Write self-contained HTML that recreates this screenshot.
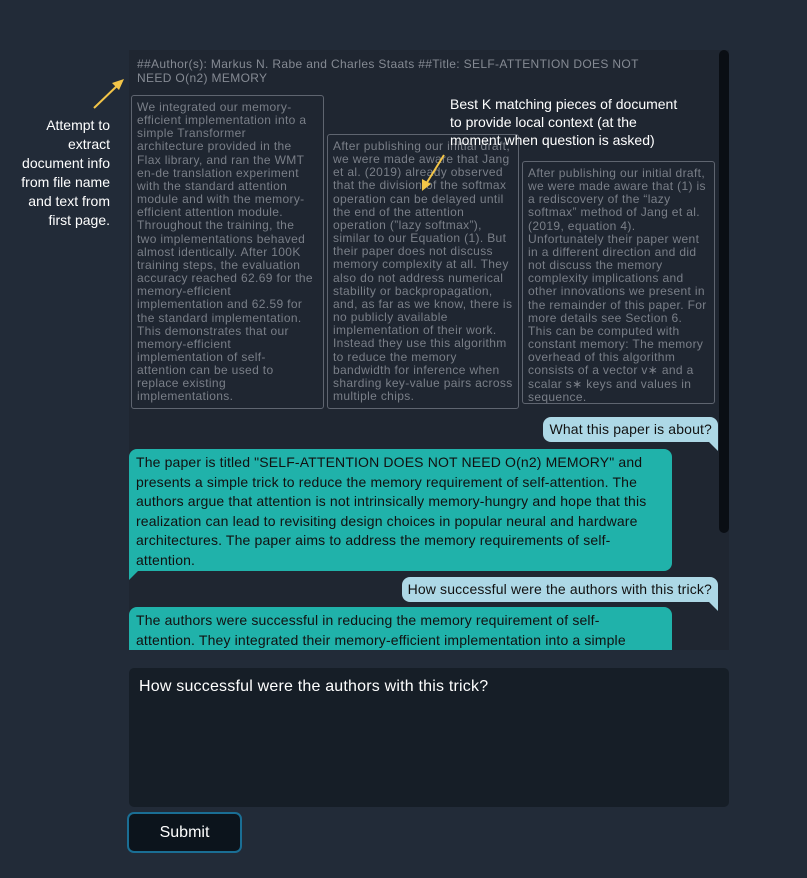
<!DOCTYPE html>
<html><head><meta charset="utf-8"><style>
*{box-sizing:border-box;margin:0;padding:0}
body{width:807px;height:878px;background:#222b38;font-family:"Liberation Sans",sans-serif;position:relative;overflow:hidden}
.chat{position:absolute;left:129px;top:50px;width:600px;height:600px;background:#1f2631;overflow:hidden}
.sb{position:absolute;left:719px;top:50px;width:10px;height:483px;background:#0a0e14;border-radius:5px}
.hdr{position:absolute;left:8px;top:7px;width:580px;font-size:12px;letter-spacing:.35px;line-height:14px;color:#858a93;white-space:nowrap}
.box{position:absolute;border:1px solid #5f6570;border-radius:3px;padding:5px 5px;font-size:12px;letter-spacing:.35px;line-height:13.15px;color:#7a7f88;white-space:nowrap;overflow:hidden}
.ub{position:absolute;background:#add8e6;color:#111;font-size:14px;letter-spacing:.15px;line-height:19px;padding:3px 6px;border-radius:8px;border-bottom-right-radius:0;white-space:nowrap}
.ub::after{content:"";position:absolute;right:0;bottom:-9px;border-top:9px solid #add8e6;border-left:9px solid transparent}
.bb{position:absolute;background:#20b2aa;color:#111;font-size:14px;letter-spacing:.15px;line-height:19.5px;padding:4px 7px;border-radius:8px;border-bottom-left-radius:0;white-space:nowrap}
.bb::after{content:"";position:absolute;left:0;bottom:-9px;border-top:9px solid #20b2aa;border-right:9px solid transparent}
.ann{position:absolute;color:#fff;font-size:14px;line-height:19px}
.ta{position:absolute;left:129px;top:668px;width:600px;height:139px;background:#161e27;border-radius:5px;color:#fff;font-size:16px;letter-spacing:.2px;padding:10px 10px}
.btn{position:absolute;left:127px;top:812px;width:115px;height:41px;background:#0c141c;border:2px solid #1a6e94;border-radius:7px;color:#fff;font-size:16px;text-align:center;line-height:37px}
</style></head><body>
<div class="chat">
<div class="hdr">##Author(s): Markus N. Rabe and Charles Staats ##Title: SELF-ATTENTION DOES NOT<br>NEED O(n2) MEMORY</div>
<div class="box" style="left:2px;top:45px;width:193px;height:314px">We integrated our memory-<br>efficient implementation into a<br>simple Transformer<br>architecture provided in the<br>Flax library, and ran the WMT<br>en-de translation experiment<br>with the standard attention<br>module and with the memory-<br>efficient attention module.<br>Throughout the training, the<br>two implementations behaved<br>almost identically. After 100K<br>training steps, the evaluation<br>accuracy reached 62.69 for the<br>memory-efficient<br>implementation and 62.59 for<br>the standard implementation.<br>This demonstrates that our<br>memory-efficient<br>implementation of self-<br>attention can be used to<br>replace existing<br>implementations.</div>
<div class="box" style="left:198px;top:84px;width:192px;height:275px">After publishing our initial draft,<br>we were made aware that Jang<br>et al. (2019) already observed<br>that the division of the softmax<br>operation can be delayed until<br>the end of the attention<br>operation (”lazy softmax”),<br>similar to our Equation (1). But<br>their paper does not discuss<br>memory complexity at all. They<br>also do not address numerical<br>stability or backpropagation,<br>and, as far as we know, there is<br>no publicly available<br>implementation of their work.<br>Instead they use this algorithm<br>to reduce the memory<br>bandwidth for inference when<br>sharding key-value pairs across<br>multiple chips.</div>
<div class="box" style="left:393px;top:111px;width:193px;height:243px">After publishing our initial draft,<br>we were made aware that (1) is<br>a rediscovery of the “lazy<br>softmax” method of Jang et al.<br>(2019, equation 4).<br>Unfortunately their paper went<br>in a different direction and did<br>not discuss the memory<br>complexity implications and<br>other innovations we present in<br>the remainder of this paper. For<br>more details see Section 6.<br>This can be computed with<br>constant memory: The memory<br>overhead of this algorithm<br>consists of a vector v∗ and a<br>scalar s∗ keys and values in<br>sequence.</div>
<div class="ub" style="right:11px;top:367px">What this paper is about?</div>
<div class="bb" style="left:0;top:399px;width:543px;height:122px">The paper is titled "SELF-ATTENTION DOES NOT NEED O(n2) MEMORY" and<br>presents a simple trick to reduce the memory requirement of self-attention. The<br>authors argue that attention is not intrinsically memory-hungry and hope that this<br>realization can lead to revisiting design choices in popular neural and hardware<br>architectures. The paper aims to address the memory requirements of self-<br>attention.</div>
<div class="ub" style="right:11px;top:527px">How successful were the authors with this trick?</div>
<div class="bb" style="left:0;top:557px;width:543px;height:80px">The authors were successful in reducing the memory requirement of self-<br>attention. They integrated their memory-efficient implementation into a simple<br>Transformer architecture.</div>
</div>
<div class="sb"></div>
<div class="ann" style="right:697px;top:116px;text-align:right">Attempt to<br>extract<br>document info<br>from file name<br>and text from<br>first page.</div>
<div class="ann" style="left:450px;top:95px;width:240px;line-height:18px">Best K matching pieces of document<br>to provide local context (at the<br>moment when question is asked)</div>
<svg style="position:absolute;left:0;top:0" width="807" height="300">
<g stroke="#f3c548" stroke-width="2" fill="#f3c548">
<line x1="94" y1="108" x2="119" y2="84"/><path d="M124 79L112 83L119 90Z" stroke="none"/>
<line x1="444" y1="155" x2="426" y2="184"/><path d="M422 191L422 179L431 184Z" stroke="none"/>
</g></svg>
<div class="ta">How successful were the authors with this trick?</div>
<div class="btn">Submit</div>
</body></html>
